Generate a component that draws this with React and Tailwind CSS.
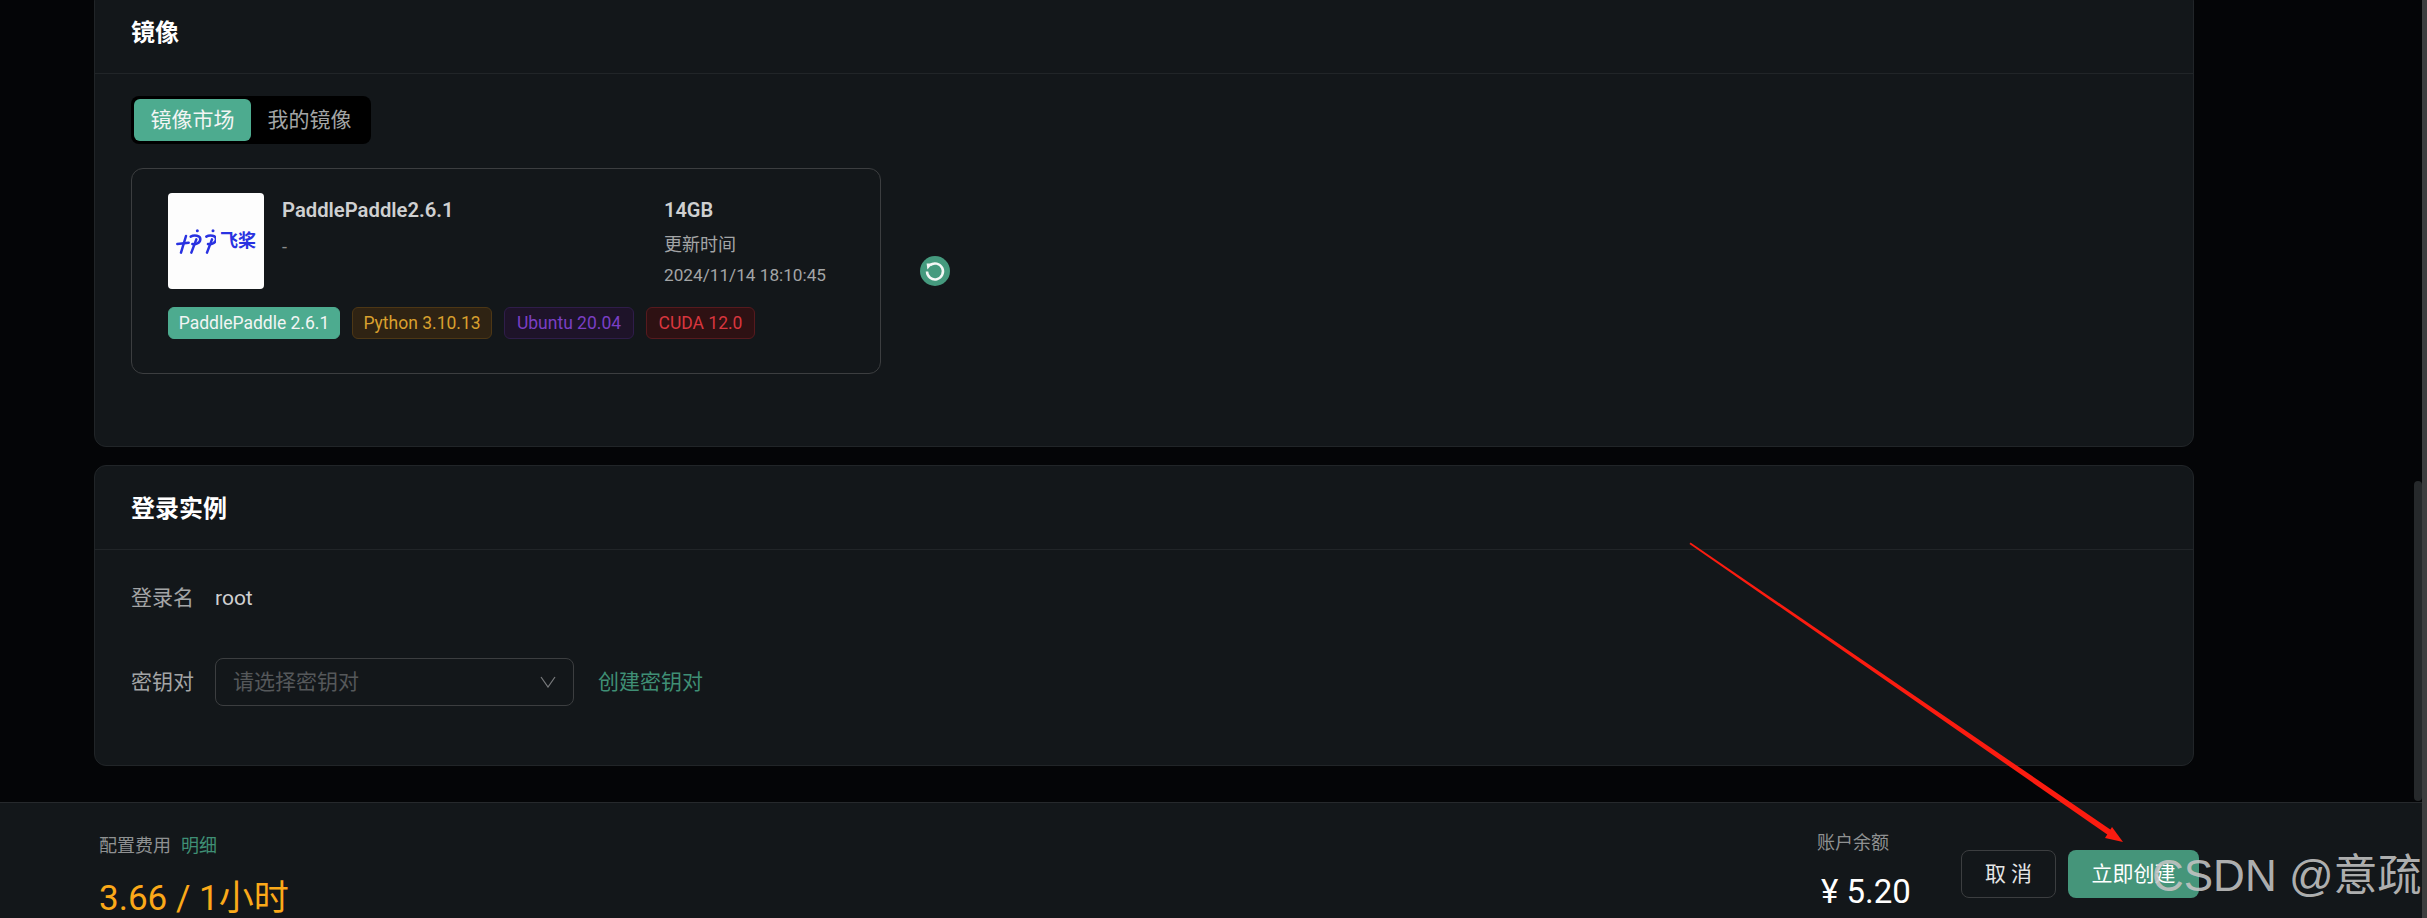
import React from 'react';

const tags = [
  { label: 'PaddlePaddle 2.6.1', className: 'w-[172px] bg-[#4dab8f] border-[#4dab8f] text-[#f2f5f4]' },
  { label: 'Python 3.10.13', className: 'w-[140px] bg-[#2f2313] border-[#4d3715] text-[#d9a02e]' },
  { label: 'Ubuntu 20.04', className: 'w-[130px] bg-[#1e1329] border-[#2f1d4a] text-[#7a3fc4]' },
  { label: 'CUDA 12.0', className: 'w-[109px] bg-[#2e1113] border-[#571a1e] text-[#d9363e]' },
];

function PaddleLogo() {
  return (
    <div className="w-24 h-24 shrink-0 rounded bg-[#fdfdfd] flex items-center justify-center gap-[4px]">
      <svg width="40" height="26" viewBox="78 142 120 78" fill="none" stroke="#2932e1" strokeWidth="7.5" strokeLinecap="round">
        <path d="M82 190L116 186" />
        <path d="M108 166L93 216" />
        <path d="M122 168C132 162 152 164 151 176C150 188 136 192 127 190" />
        <path d="M139 176L124 216" />
        <path d="M169 168C179 162 199 164 198 176C197 188 183 192 174 190" />
        <path d="M186 176L171 216" />
        <circle cx="142" cy="150" r="4.5" fill="#2932e1" stroke="none" />
        <circle cx="189" cy="150" r="4.5" fill="#2932e1" stroke="none" />
      </svg>
      <span className="text-lg leading-none font-semibold text-[#2932e1]">飞桨</span>
    </div>
  );
}

function RefreshIcon() {
  return (
    <div className="w-[30px] h-[30px] rounded-full bg-[#459a7e] flex items-center justify-center">
      <svg width="22" height="22" viewBox="0 0 22 22" fill="none">
        <path d="M6 5.2A8 8 0 1 1 3 11.6" stroke="#f5f7f6" strokeWidth="2.5" />
        <path d="M2.6 3.6L8.6 3.4L3.4 9.4Z" fill="#f5f7f6" />
      </svg>
    </div>
  );
}

function Panel({ title, className, children }) {
  return (
    <section className={`rounded-xl border border-[#212528] bg-[#13171a] ${className}`}>
      <div className="h-[84px] px-[36px] pt-[2px] flex items-center border-b border-[#212528]">
        <h2 className="text-2xl font-bold text-white">{title}</h2>
      </div>
      {children}
    </section>
  );
}

export default function App() {
  return (
    <div className="relative h-[918px] overflow-hidden flex flex-col bg-[#040507] font-['Roboto','Noto_Sans_CJK_SC',sans-serif]">
      <main className="flex-1 min-h-0 pl-[94px] w-[2194px] flex flex-col gap-[18px]">
        <Panel title="镜像" className="h-[458px] -mt-[11px] shrink-0">
          <div className="pl-[36px] pt-[22px]">
            <div className="inline-flex w-[240px] h-[48px] p-[3px] rounded-lg bg-black text-[21px]">
              <div className="w-[117px] pt-[2px] rounded-md bg-[#4dab8f] text-[#f2f5f4] flex items-center justify-center">镜像市场</div>
              <div className="flex-1 pt-[2px] text-[#a3a5a6] flex items-center justify-center">我的镜像</div>
            </div>
            <div className="mt-[24px] flex items-center">
              <div className="w-[750px] h-[206px] rounded-xl border border-[#3c3e40] pl-[36px] pt-[24px]">
                <div className="flex">
                  <PaddleLogo />
                  <div className="ml-[18px] w-[382px] pt-[2px]">
                    <div className="text-[20.25px] leading-[30px] font-semibold text-[#cfd0d1]">PaddlePaddle2.6.1</div>
                    <div className="mt-[10px] text-lg leading-6 text-[#8a8c8d]">-</div>
                  </div>
                  <div className="pt-[2px]">
                    <div className="text-[20px] leading-[30px] font-semibold text-[#cfd0d1]">14GB</div>
                    <div className="mt-[8px] text-lg leading-6 text-[#a3a5a6]">更新时间</div>
                    <div className="mt-[6px] text-[17.2px] leading-6 text-[#a3a5a6]">2024/11/14 18:10:45</div>
                  </div>
                </div>
                <div className="mt-[18px] flex gap-3">
                  {tags.map((tag) => (
                    <span key={tag.label} className={`h-8 rounded-md border text-center text-[17.5px] leading-[30px] ${tag.className}`}>
                      {tag.label}
                    </span>
                  ))}
                </div>
              </div>
              <div className="ml-[39px]">
                <RefreshIcon />
              </div>
            </div>
          </div>
        </Panel>

        <Panel title="登录实例" className="h-[301px] shrink-0">
          <div className="pl-[36px] pt-[24px] text-[21px] text-[#a3a5a6]">
            <div className="flex items-center h-[48px] pt-[2px]">
              <span className="w-[84px]">登录名</span>
              <span className="text-[#cfd0d1]">root</span>
            </div>
            <div className="mt-[36px] flex items-center h-[48px]">
              <span className="w-[84px] pt-[2px]">密钥对</span>
              <div className="w-[359px] h-[48px] rounded-lg border border-[#3c3e40] pl-[17px] pr-[17px] flex items-center justify-between">
                <span className="pt-[2px] text-[#55585a]">请选择密钥对</span>
                <svg width="16" height="12" viewBox="0 0 16 12" fill="none" stroke="#77797b" strokeWidth="1.25">
                  <path d="M1 1L8 11L15 1" />
                </svg>
              </div>
              <span className="ml-[24px] pt-[2px] text-[#3f8f75]">创建密钥对</span>
            </div>
          </div>
        </Panel>
      </main>

      <footer className="h-[116px] shrink-0 border-t border-[#26292c] bg-[#13171a] pl-[99px] pr-[228px] flex justify-between">
        <div>
          <div className="mt-[31px] flex gap-[10px] text-lg leading-6">
            <span className="text-[#8f9192]">配置费用</span>
            <span className="text-[#3f8f75]">明细</span>
          </div>
          <div className="mt-[15px] text-[35px] leading-[52px] text-[#fba919]">3.66 / 1小时</div>
        </div>
        <div className="flex">
          <div className="w-[144px]">
            <div className="mt-[28px] text-lg leading-6 text-[#8f9192]">账户余额</div>
            <div className="mt-[13px] ml-[4px] text-[33px] leading-[48px] text-white">¥ 5.20</div>
          </div>
          <div className="mt-[47px] flex gap-3">
            <button className="w-[95px] h-[48px] pt-[2px] rounded-lg border border-[#3c3e40] bg-[#13171a] text-[21px] text-[#e4e5e5]">取 消</button>
            <button className="w-[131px] h-[48px] pt-[2px] rounded-lg bg-[#45957a] text-[21px] text-white">立即创建</button>
          </div>
        </div>
      </footer>

      {/* scrollbar */}
      <div className="absolute right-0 top-0 h-full w-[5px] bg-[#3d3e3f]" />
      <div className="absolute right-[5px] top-[481px] h-[320px] w-2 rounded-md bg-[#26292b]" />

      {/* red annotation arrow */}
      <svg className="absolute left-0 top-0 pointer-events-none" width="2427" height="918" fill="none">
        <polygon points="1689.5,544 1690.5,542.5 2111,830 2108,835" fill="#fb1c10" />
        <path d="M2123 842L2105 838L2112 827Z" fill="#fb1c10" />
      </svg>

      {/* CSDN watermark */}
      <div className="absolute left-[2152px] top-[846px] text-[44px] leading-[60px] whitespace-nowrap text-[#c4c4c4]/90 font-['Liberation_Sans','Noto_Sans_CJK_SC',sans-serif]">
        CSDN @意疏
      </div>
    </div>
  );
}
